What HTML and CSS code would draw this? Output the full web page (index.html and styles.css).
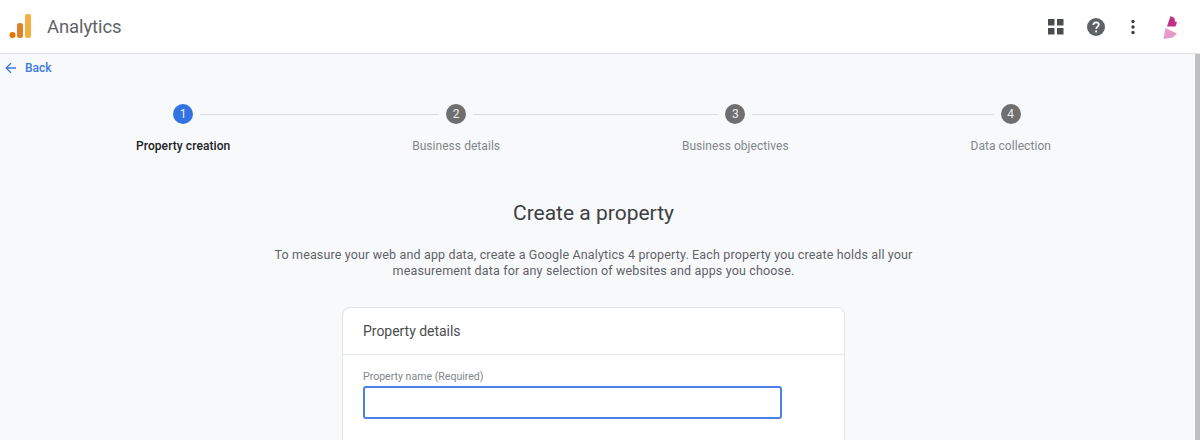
FILE: index.html
```html
<!DOCTYPE html>
<html lang="en">
<head>
<meta charset="utf-8">
<title>Analytics</title>
<link rel="stylesheet" href="styles.css">
</head>
<body>
<header class="topbar">
  <div class="brand">
    <svg class="logo" width="24" height="28" viewBox="0 0 24 28"><circle cx="4.5" cy="22" r="3" fill="#e37400"/><rect x="9" y="10" width="6" height="15" rx="2.5" fill="#e07f2a"/><rect x="17" y="1" width="6" height="24" rx="2.5" fill="#f4b03e"/></svg>
    <span class="brand-name">Analytics</span>
  </div>
  <div class="actions">
    <svg class="icon-grid" width="16" height="16" viewBox="0 0 16 16" fill="#4a4d50"><rect width="6.500" height="6.500"/><rect x="9" width="6.500" height="6.500"/><rect y="9" width="6.500" height="6.500"/><rect x="9" y="9" width="6.500" height="6.500"/></svg>
    <svg class="icon-help" width="18" height="18" viewBox="0 0 18 18"><circle cx="9" cy="9" r="9" fill="#5f6368"/><path d="M6.300 7c0-1.600 1.200-2.700 2.800-2.700s2.700 1 2.700 2.400c0 1.900-2.600 2-2.600 4.200" fill="none" stroke="#fff" stroke-width="1.700"/><rect x="8.200" y="12.600" width="1.800" height="1.800" fill="#fff"/></svg>
    <svg class="icon-more" width="4" height="16" viewBox="0 0 4 16" fill="#3c4043"><circle cx="2" cy="2.500" r="1.700"/><circle cx="2" cy="8" r="1.700"/><circle cx="2" cy="13.500" r="1.700"/></svg>
    <svg class="avatar" width="16" height="24" viewBox="0 0 16 24"><path d="M4 11.500 7.500 1l4 2 .5 3.500 2 .5L12.500 11.500z" fill="#bd3288"/><path d="M2.500 13 14 18.500 10 22.500 .5 24z" fill="#e49ccb"/></svg>
  </div>
</header>
<div class="page">
  <main class="content">
    <a class="back" href="#">
      <svg width="12" height="12" viewBox="0 0 12 12"><path d="M11 6H1.500M6 1.200 1.200 6 6 10.800" fill="none" stroke="#3f78e0" stroke-width="1.300"/></svg>
      <span>Back</span>
    </a>
    <ol class="stepper">
      <li class="step step-active"><span class="num">1</span><span class="label">Property creation</span></li>
      <li class="step"><span class="num">2</span><span class="label">Business details</span></li>
      <li class="step"><span class="num">3</span><span class="label">Business objectives</span></li>
      <li class="step"><span class="num">4</span><span class="label">Data collection</span></li>
    </ol>
    <h1 class="title">Create a property</h1>
    <p class="intro">To measure your web and app data, create a Google Analytics 4 property. Each property you create holds all your measurement data for any selection of websites and apps you choose.</p>
    <section class="card">
      <h2 class="card-title">Property details</h2>
      <div class="card-body">
        <label class="field-label" for="pname">Property name (Required)</label>
        <input class="field" id="pname" type="text">
      </div>
    </section>
  </main>
  <div class="scrollbar"></div>
</div>
</body>
</html>
```
FILE: styles.css
```css
* { box-sizing: border-box; }
html, body { margin: 0; height: 100%; overflow: hidden; }
body {
  width: 1200px;
  height: 440px;
  display: flex;
  flex-direction: column;
  font-family: Roboto, "Liberation Sans", sans-serif;
  background: #f8f9fa;
}
.topbar {
  height: 54px;
  flex: none;
  background: #fff;
  border-bottom: 1px solid #dfe1e4;
  display: flex;
  align-items: center;
  justify-content: space-between;
  padding: 0 21px 0 8px;
}
.brand { display: flex; align-items: center; gap: 15px; }
.logo { display: block; margin-top: 1px; }
.brand-name { font-size: 18.500px; color: #5f6368; letter-spacing: -0.1px; }
.actions { display: flex; align-items: center; }
.icon-grid { margin-right: 23px; }
.icon-help { margin-right: 26px; }
.icon-more { margin-right: 28px; }
.avatar { display: block; }
.page { flex: 1; display: flex; min-height: 0; }
.content { flex: 1; padding-right: 8px; min-width: 0; }
.scrollbar { width: 5px; background: #c1c1c1; }
.back {
  display: flex;
  align-items: center;
  gap: 8px;
  padding: 0 0 0 5px;
  height: 28px;
  color: #3f78e0;
  font-size: 12px;
  font-weight: 500;
  text-decoration: none;
}
.stepper {
  position: relative;
  list-style: none;
  display: flex;
  justify-content: space-between;
  margin: 22px 136px 0;
  padding: 0;
}
.stepper::before {
  content: "";
  position: absolute;
  top: 10px;
  left: 47px;
  right: 42px;
  height: 1px;
  background: #dadce0;
}
.step {
  position: relative;
  display: flex;
  flex-direction: column;
  align-items: center;
  gap: 14px;
}
.num {
  width: 20px;
  height: 20px;
  border-radius: 50%;
  background: #6f6f6f;
  color: #eee;
  font-size: 12px;
  line-height: 20px;
  text-align: center;
  box-shadow: 0 0 0 7px #f8f9fa;
}
.label {
  font-size: 12px;
  line-height: 16px;
  color: #80868b;
  letter-spacing: 0.05px;
  white-space: nowrap;
}
.step-active .num { background: #3272e3; }
.step-active .label { color: #202124; font-weight: 500; letter-spacing: 0.08px; }
.title {
  margin: 45px 0 0;
  text-align: center;
  font-size: 21px;
  line-height: 28px;
  font-weight: 400;
  color: #3c4043;
}
.intro {
  width: 660px;
  margin: 20px auto 0;
  text-align: center;
  font-size: 12.500px;
  line-height: 16px;
  color: #5f6368;
  letter-spacing: 0.15px;
}
.card {
  width: 503px;
  margin: 28px auto 0;
  height: 133px;
  background: #fff;
  border: 1px solid #e3e5e8;
  border-radius: 8px 8px 0 0;
  border-bottom: 0;
}
.card-title {
  margin: 0;
  height: 47px;
  padding: 0 20px;
  display: flex;
  align-items: center;
  border-bottom: 1px solid #e6e8ea;
  font-size: 14px;
  font-weight: 400;
  color: #4a4d50;
  letter-spacing: -0.03px;
}
.card-body { padding: 15px 20px 0; }
.field-label {
  display: block;
  font-size: 10.500px;
  line-height: 14px;
  color: #80868b;
  letter-spacing: 0.03px;
}
.field {
  display: block;
  width: 419px;
  height: 33px;
  margin-top: 2px;
  border: 2px solid #4a80e8;
  border-radius: 3px;
  background: #fff;
  outline: none;
}
```
